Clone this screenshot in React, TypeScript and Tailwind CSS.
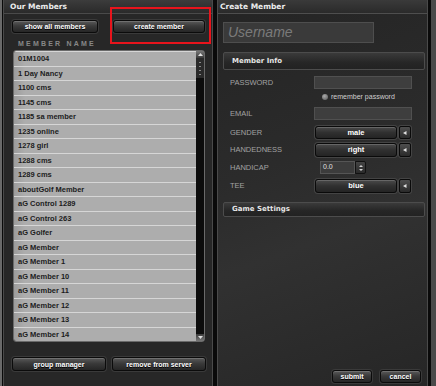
import React from "react";

const members = [
  "01M1004",
  "1 Day Nancy",
  "1100 cms",
  "1145 cms",
  "1185 sa member",
  "1235 online",
  "1278 girl",
  "1288 cms",
  "1289 cms",
  "aboutGolf Member",
  "aG Control 1289",
  "aG Control 263",
  "aG Golfer",
  "aG Member",
  "aG Member 1",
  "aG Member 10",
  "aG Member 11",
  "aG Member 12",
  "aG Member 13",
  "aG Member 14",
];

const sans = "font-['Liberation_Sans',Arial,sans-serif]";
const head = "font-['DejaVu_Sans',Verdana,sans-serif]";

function Btn({ label, w, h = 13 }: { label: string; w: string; h?: number }) {
  return (
    <div
      className={`${w} ${sans} flex items-center justify-center rounded-[3px] border border-[#0b0b0b] bg-[linear-gradient(#5a5a5a,#3a3a3a_45%,#262626)] text-[7px] font-bold leading-none text-white shadow-[inset_0_1px_0_#707070,0_0_0_1px_#3a3a3a] [text-shadow:0_1px_0_#000]`}
      style={{ height: h }}
    >
      {label}
    </div>
  );
}

function Select({ value }: { value: string }) {
  return (
    <div className="flex h-full w-[96px] items-stretch gap-[2px]">
      <div
        className={`${sans} flex flex-1 items-center justify-center rounded-[3px] border border-[#0a0a0a] bg-[linear-gradient(#4a4a4a,#303030_50%,#242424)] text-[7.5px] font-bold text-white shadow-[inset_0_1px_0_#666,0_0_0_1px_#444]`}
      >
        {value}
      </div>
      <div className="flex w-[12px] items-center justify-center rounded-[2px] border border-[#0a0a0a] bg-[linear-gradient(#4e4e4e,#2a2a2a)] shadow-[0_0_0_1px_#444]">
        <svg width="4" height="4" viewBox="0 0 4 4">
          <path d="M0 2 L3.5 0 L3.5 4 Z" fill="#e0e0e0" />
        </svg>
      </div>
    </div>
  );
}

function Row({
  label,
  h,
  mt,
  children,
}: {
  label: string;
  h: string;
  mt: string;
  children?: React.ReactNode;
}) {
  return (
    <div className={`flex ${h} ${mt} items-center`}>
      <div className={`${sans} w-[96px] pl-[12px] text-[7.5px] text-[#a2a2a2]`}>{label}</div>
      <div className="flex h-full items-stretch">{children}</div>
    </div>
  );
}

function Bar({ label, h }: { label: string; h: string }) {
  return (
    <div
      className={`${head} ${h} ml-[5px] flex w-[202px] items-center rounded-[2px] border border-[#4c4c4c] bg-[linear-gradient(#3a3a3a,#262626_60%,#222222)] pl-[8px] text-[7px] font-bold text-[#e6e6e6]`}
    >
      {label}
    </div>
  );
}

export default function App() {
  return (
    <div className="flex h-[386px] w-[436px] overflow-hidden bg-[#0a0a0a]">
      <div className="w-[2px] bg-[#6a6a6a]" />
      <div className="w-[1px]" />
      {/* Left panel */}
      <div className="relative flex w-[210px] flex-col border-x border-[#4a4a4a] bg-[#272727]">
        <div
          className={`${head} flex h-[14px] items-center border-b border-[#4a4a4a] bg-[linear-gradient(#3c3c3c,#2a2a2a)] pl-[6px] text-[7.5px] font-bold text-[#ececec]`}
        >
          Our Members
        </div>
        <div className="mt-[6px] flex h-[13px] pl-[8px]">
          <Btn label="show all members" w="w-[86px]" />
          <div className="w-[15px]" />
          <Btn label="create member" w="w-[92px]" />
        </div>
        <div
          className={`${sans} mt-[5px] h-[11px] pl-[14px] text-[7px] font-bold leading-[11px] tracking-[2.2px] text-[#878787]`}
        >
          MEMBER NAME
        </div>
        <div className="ml-[9px] mt-[1px] flex h-[292px] w-[192px] rounded-[3px] border border-[#6a6a6a] bg-[#0e0e0e]">
          <div className="flex flex-1 flex-col overflow-hidden rounded-l-[2px]">
            {members.map((m) => (
              <div
                key={m}
                className={`${sans} flex h-[14.5px] shrink-0 items-center border-t border-[#d6d6d6] bg-[linear-gradient(90deg,#9c9c9c,#adadad_6%,#adadad)] pl-[4px] text-[7.5px] font-bold text-[#1c1c1c]`}
              >
                {m}
              </div>
            ))}
          </div>
          <div className="flex w-[8px] flex-col bg-[#0c0c0c]">
            <div className="flex h-[7px] items-center justify-center bg-[linear-gradient(#777,#3a3a3a)]">
              <svg width="5" height="3" viewBox="0 0 5 3">
                <path d="M0 3 L2.5 0 L5 3 Z" fill="#e0e0e0" />
              </svg>
            </div>
            <div className="flex h-[20px] flex-col items-center justify-center gap-[3px] bg-[#2a2a2a]">
              <div className="h-[1px] w-[2px] bg-[#8a8a8a]" />
              <div className="h-[1px] w-[2px] bg-[#8a8a8a]" />
              <div className="h-[1px] w-[2px] bg-[#8a8a8a]" />
              <div className="h-[1px] w-[2px] bg-[#8a8a8a]" />
            </div>
            <div className="flex-1" />
            <div className="flex h-[7px] items-center justify-center bg-[linear-gradient(#3a3a3a,#777)]">
              <svg width="5" height="3" viewBox="0 0 5 3">
                <path d="M0 0 L5 0 L2.5 3 Z" fill="#e0e0e0" />
              </svg>
            </div>
          </div>
        </div>
        <div className="mt-[15px] flex h-[14px] pl-[8px]">
          <Btn label="group manager" w="w-[94px]" h={14} />
          <div className="w-[6px]" />
          <Btn label="remove from server" w="w-[94px]" h={14} />
        </div>
        {/* annotation */}
        <div className="absolute left-[106px] top-[7px] h-[37px] w-[101px] border-2 border-[#e8141c]" />
      </div>
      <div className="w-[4px]" />
      {/* Right panel */}
      <div className="flex w-[211px] flex-col border-x border-[#4a4a4a] bg-[linear-gradient(160deg,#242424,#2b2b2b_40%,#313131_60%,#262626)]">
        <div
          className={`${head} flex h-[14px] items-center border-b border-[#4e4e4e] bg-[linear-gradient(#3a3a3a,#2a2a2a)] pl-[2px] text-[7.5px] font-bold text-[#ececec]`}
        >
          Create Member
        </div>
        <div
          className={`ml-[5px] mt-[8px] flex h-[21px] w-[151px] items-center border border-[#4e4e4e] bg-[#3a3a3a] pl-[4px] font-['Liberation_Sans',Arial,sans-serif] text-[14px] italic text-[#7a7a7a]`}
        >
          Username
        </div>
        <div className="h-[9px]" />
        <Bar label="Member Info" h="h-[18px]" />
        <Row label="PASSWORD" h="h-[13px]" mt="mt-[6px]">
          <div className="w-[98px] border border-[#505050] bg-[#3e3e3e]" />
        </Row>
        <div className="mt-[1px] flex h-[14px] items-center pl-[104px]">
          <div className="h-[6px] w-[6px] rounded-full bg-[radial-gradient(circle_at_40%_35%,#aaa,#555)]" />
          <span className={`${sans} ml-[3px] text-[7px] text-[#d0d0d0]`}>remember password</span>
        </div>
        <Row label="EMAIL" h="h-[13px]" mt="mt-[3px]">
          <div className="w-[98px] border border-[#505050] bg-[#3e3e3e]" />
        </Row>
        <Row label="GENDER" h="h-[13px]" mt="mt-[6px]">
          <div className="ml-[1px] h-full">
            <Select value="male" />
          </div>
        </Row>
        <Row label="HANDEDNESS" h="h-[14px]" mt="mt-[4px]">
          <div className="ml-[1px] h-full">
            <Select value="right" />
          </div>
        </Row>
        <Row label="HANDICAP" h="h-[13px]" mt="mt-[4px]">
          <div className="ml-[6px] flex h-full">
            <div
              className={`${sans} flex w-[35px] items-center border border-[#555] bg-[#3c3c3c] pl-[2px] text-[7px] text-[#e0e0e0]`}
            >
              0.0
            </div>
            <div className="flex w-[11px] flex-col items-center justify-center gap-[2px] rounded-r-[2px] border border-[#111] bg-[linear-gradient(#444,#2a2a2a)]">
              <svg width="4" height="2" viewBox="0 0 4 2">
                <path d="M0 2 L2 0 L4 2 Z" fill="#d0d0d0" />
              </svg>
              <svg width="4" height="2" viewBox="0 0 4 2">
                <path d="M0 0 L4 0 L2 2 Z" fill="#d0d0d0" />
              </svg>
            </div>
          </div>
        </Row>
        <Row label="TEE" h="h-[14px]" mt="mt-[5px]">
          <div className="ml-[1px] h-full">
            <Select value="blue" />
          </div>
        </Row>
        <div className="h-[9px]" />
        <Bar label="Game Settings" h="h-[15px]" />
        <div className="flex-1" />
        <div className="mb-[3px] flex h-[13px] pl-[114px]">
          <Btn label="submit" w="w-[40px]" />
          <div className="w-[8px]" />
          <Btn label="cancel" w="w-[41px]" />
        </div>
      </div>
      <div className="w-[3px]" />
      <div className="w-[5px] bg-[#4a4a4a]" />
    </div>
  );
}
